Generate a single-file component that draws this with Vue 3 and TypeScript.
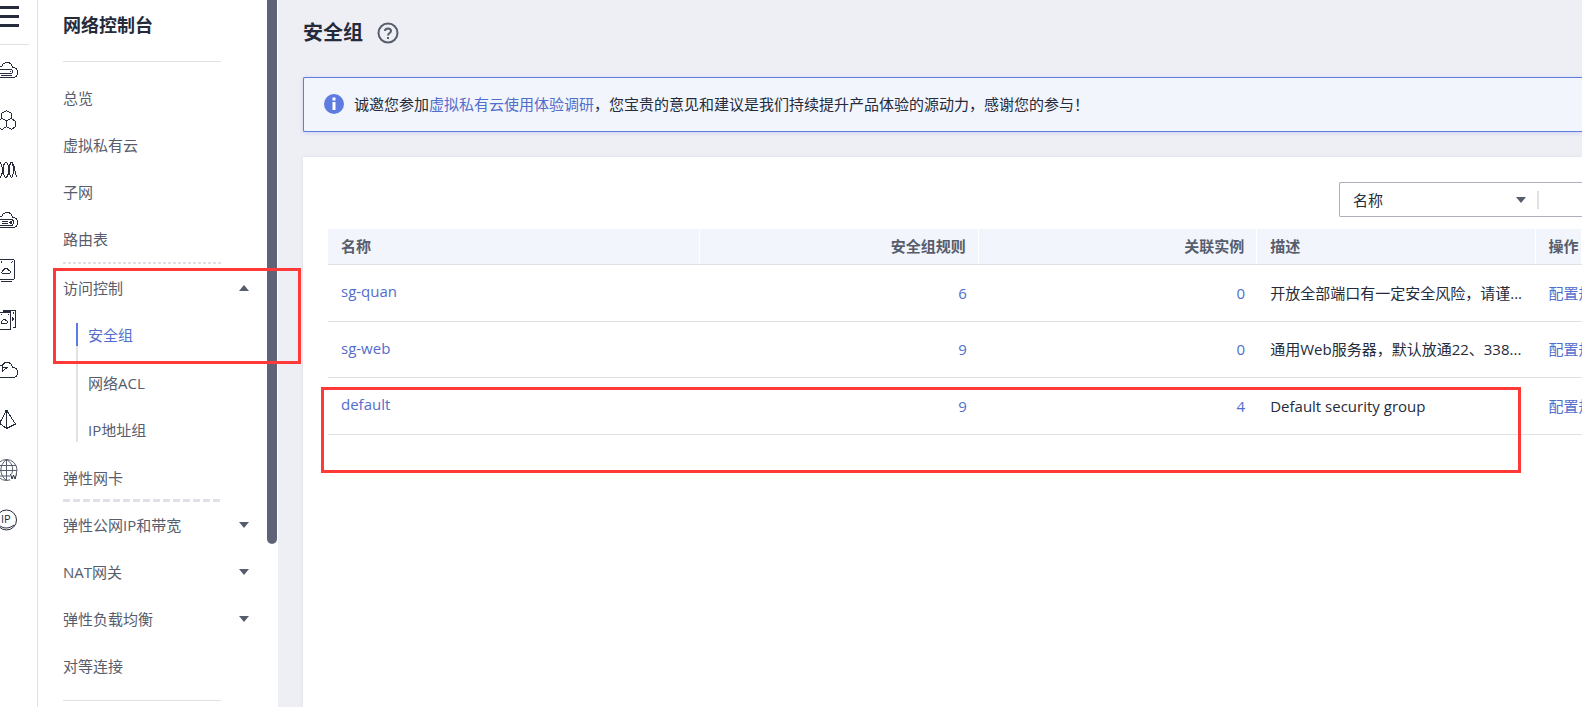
<script setup lang="ts">
import { ref } from 'vue'

interface NavItem {
  label: string
  expandable?: boolean
}
interface GroupRow {
  name: string
  rules: number
  instances: number
  description: string
}

const services: string[] = ['ecs', 'cce', 'as', 'bms', 'evs', 'backup', 'function', 'vpc', 'domain', 'eip']
const overview: NavItem[] = [{ label: '总览' }, { label: '虚拟私有云' }, { label: '子网' }, { label: '路由表' }]
const access: string[] = ['安全组', '网络ACL', 'IP地址组']
const network: NavItem[] = [
  { label: '弹性公网IP和带宽', expandable: true },
  { label: 'NAT网关', expandable: true },
  { label: '弹性负载均衡', expandable: true },
  { label: '对等连接' },
]
const rows: GroupRow[] = [
  { name: 'sg-quan', rules: 6, instances: 0, description: '开放全部端口有一定安全风险，请谨...' },
  { name: 'sg-web', rules: 9, instances: 0, description: '通用Web服务器，默认放通22、338...' },
  { name: 'default', rules: 9, instances: 4, description: 'Default security group' },
]
const current = ref('安全组')
const field = ref('名称')
const keyword = ref('')
</script>

<template>
  <div class="console">
    <aside class="rail">
      <button class="menu" type="button" aria-label="菜单"><i></i><i></i><i></i></button>
      <nav class="services">
        <a v-for="s in services" :key="s" href="#" :aria-label="s">
          <svg width="19" height="24" viewBox="0 0 19 24">
            <g v-if="s === 'ecs'" class="crisp">
              <path d="M0 9C1 9 1.500 8.500 2 8C3 5.500 4.500 4.500 7 4.500C10 4.500 12 6.500 12.500 9C15.500 9.500 17.500 11.500 17.500 14.500C17.500 17.500 15.500 19.500 12.500 19.500H0" />
              <path d="M0 11.500H11.500L12.500 12.500V14.500L11.500 15.500H0M1 17.500H12M10 13.500h1" />
            </g>
            <g v-else-if="s === 'cce'" class="crisp">
              <path d="M6.500 2.500L11.500 5.500V10.500L6.500 12.500L1.500 10.500V5.500ZM11.500 10.500L15.500 13.500V18.500L11.500 21.500L6.500 18.500V12.500M6.500 18.500L2 21.500L-3 18.500V13.500L1.500 10.500" />
            </g>
            <g v-else-if="s === 'as'" class="crisp">
              <path d="M0 4.500C3 7 3 17 0 19.500" />
              <ellipse cx="6" cy="12" rx="2.500" ry="7.500" />
              <path d="M0 19.500C4 17 2 5 5.500 4.500M6 19.500C10.500 17 8 5 11.500 4.500M6.500 4.500C10 6 8.500 18 11.500 19.500M11.500 4.500C7.500 8 9 17 11.500 19.500C14 17 14 7 11.500 4.500C16 5 14 18 17.500 19.500" />
            </g>
            <g v-else-if="s === 'bms'" class="crisp">
              <path d="M0 9C1 9 1.500 8.500 2 8C3 5.500 4.500 4.500 7 4.500C10 4.500 12 6.500 12.500 9C15.500 9.500 17.500 11.500 17.500 14.500C17.500 17.500 15.500 19.500 12.500 19.500H0" />
              <path d="M0 11.500H12L13.500 13V15.500L12 17.500H0M2 13.500H8M2 15.500H8" />
              <circle cx="11" cy="14.500" r="1" />
            </g>
            <g v-else-if="s === 'evs'" class="crisp">
              <path d="M0 1.500H13.500L14.500 2.500V20.500L13.500 21.500H0M1 23.500H12M1.500 3v2M12.500 3v1M11.500 4v1" />
              <path d="M3 15.500C1.500 15.500 1.500 12.500 3.500 12.500C4 10 8 9.500 8.500 12.500C11 12.500 11 15.500 9 15.500Z" />
            </g>
            <g v-else-if="s === 'backup'" class="crisp">
              <path d="M0 4.500H10.500V21.500H0M3 2.500H15.500V19.500H12.500M3 3.500H11M13.500 4v2M12 9.500L13.500 11L12 12.500M1.500 6v1M8.500 6v1" />
              <path d="M2 15.500C1 15 1 13.500 2.500 12.500C3 11 6 11 6 12.500C8 13.500 7.500 15 6 15.500Z" />
            </g>
            <g v-else-if="s === 'function'" class="crisp">
              <path d="M0 7.500H2C3 5.500 4.500 4.500 7 4.500C10 4.500 12 6.500 12.500 9C15.500 9.500 17.500 11.500 17.500 14.500C17.500 17.500 15.500 19.500 12.500 19.500H0M2.500 6.500L2.500 13.500L7 9.500H2" />
            </g>
            <g v-else-if="s === 'vpc'" class="crisp">
              <path d="M6.500 3V21M6 3L0 14.500M7 3L15.500 16L6.500 20.500L0 15.500" />
              <path d="M5.500 2.500h2v2h-2z" class="solid" />
            </g>
            <g v-else-if="s === 'domain'" class="soft">
              <circle cx="6.500" cy="12" r="10.500" />
              <path d="M6.500 1.500V22.500M0 7.500H16M0 12.500H17M0 18H10M6.500 1.500C14 6 14 13 10 19M6.500 1.500C-1 7 -1 17 6.500 22.500" />
              <path d="M10 16h7v6h-7z" class="patch" />
              <path d="M10.500 16L12 21L13.500 17L15 21L16.500 16" class="strong" />
            </g>
            <g v-else>
              <circle cx="6.500" cy="12" r="10" />
              <path d="M-1 17C3 21 9 21 14 17" />
              <text x="1" y="15">IP</text>
            </g>
          </svg>
        </a>
      </nav>
    </aside>

    <aside class="sidebar">
      <h2>网络控制台</h2>
      <hr class="rule" />
      <nav class="nav">
        <a v-for="n in overview" :key="n.label" class="item" href="#">{{ n.label }}</a>
        <div class="dots"></div>
        <div class="group">
          <button class="item" type="button">
            访问控制
            <svg class="caret" width="10" height="6" viewBox="0 0 10 6"><path d="M0 6L5 0L10 6Z" /></svg>
          </button>
          <div class="sub">
            <a v-for="a in access" :key="a" href="#" :class="{ active: a === current }" @click.prevent="current = a"><span>{{ a }}</span></a>
          </div>
          <div class="mark mark-nav"></div>
        </div>
        <a class="item" href="#">弹性网卡</a>
        <div class="dashes"></div>
        <template v-for="n in network" :key="n.label">
          <button v-if="n.expandable" class="item" type="button">
            {{ n.label }}
            <svg class="caret" width="10" height="6" viewBox="0 0 10 6"><path d="M0 0L5 6L10 0Z" /></svg>
          </button>
          <a v-else class="item" href="#">{{ n.label }}</a>
        </template>
        <hr class="rule last" />
      </nav>
      <div class="thumb"></div>
    </aside>

    <main class="content">
      <header class="head">
        <h1>安全组</h1>
        <button type="button" class="help" aria-label="帮助">
          <svg width="22" height="22" viewBox="0 0 22 22">
            <circle cx="11" cy="11" r="9.500" />
            <path d="M8 9C8 5.500 14 5.500 14 9C14 11 11 11 11 13.500M11 15V17" />
          </svg>
        </button>
      </header>

      <section class="notice">
        <svg width="20" height="20" viewBox="0 0 20 20">
          <circle cx="10" cy="10" r="10" />
          <path d="M8.500 3.500h3v3h-3zM8.500 8h3v8h-3z" />
        </svg>
        <p>诚邀您参加<a href="#">虚拟私有云使用体验调研</a>，您宝贵的意见和建议是我们持续提升产品体验的源动力，感谢您的参与！</p>
      </section>

      <section class="panel">
        <div class="search">
          <div class="field">
            <select v-model="field" aria-label="搜索字段"><option>名称</option></select>
            <svg class="caret" width="10" height="6" viewBox="0 0 10 6"><path d="M0 0L5 6L10 0Z" /></svg>
          </div>
          <input v-model="keyword" type="text" aria-label="关键字" />
        </div>
        <div class="list">
          <table>
            <colgroup><col class="c-name" /><col class="c-mid" /><col class="c-mid" /><col class="c-mid" /><col /></colgroup>
            <thead>
              <tr><th>名称</th><th class="num">安全组规则</th><th class="num">关联实例</th><th>描述</th><th>操作</th></tr>
            </thead>
            <tbody>
              <tr v-for="r in rows" :key="r.name">
                <td class="name"><a href="#">{{ r.name }}</a></td>
                <td class="num"><a href="#">{{ r.rules }}</a></td>
                <td class="num"><a href="#">{{ r.instances }}</a></td>
                <td>{{ r.description }}</td>
                <td><a href="#">配置规则</a></td>
              </tr>
            </tbody>
          </table>
          <div class="mark mark-row"></div>
        </div>
      </section>
    </main>
  </div>
</template>

<style>
body {
  margin: 0;
}
</style>

<style scoped>
.console {
  display: flex;
  height: 100vh;
  overflow: hidden;
  background: #eeeff5;
  color: #252b3a;
  font: 15px/24px "Open Sans", "Noto Sans CJK SC", sans-serif;
}
.console * {
  box-sizing: border-box;
}
a {
  color: #526ecc;
  text-decoration: none;
}
button,
select,
input {
  border: 0;
  padding: 0;
  background: none;
  font: inherit;
  color: inherit;
  outline: none;
}
svg {
  display: block;
}

.rail {
  flex: none;
  width: 38px;
  background: #fff;
  border-right: 1px solid #dfe1e6;
}
.menu {
  display: flex;
  flex-direction: column;
  gap: 6px;
  width: 29px;
  height: 45px;
  padding-top: 6px;
  border-bottom: 1px solid #dfe1e6;
}
.menu i {
  width: 19px;
  height: 3px;
  background: #252b3a;
}
.services {
  display: flex;
  flex-direction: column;
  gap: 26px;
  padding-top: 13px;
}
.services svg {
  fill: none;
  stroke: #252b3a;
  stroke-width: 1;
}
.services .crisp {
  shape-rendering: crispEdges;
}
.services .solid {
  fill: #252b3a;
}
.services .soft {
  stroke: #575d6c;
}
.services .patch {
  fill: #fff;
  stroke: none;
}
.services .strong {
  stroke: #252b3a;
}
.services text {
  fill: #252b3a;
  stroke: none;
  font-size: 11px;
}

.sidebar {
  position: relative;
  flex: none;
  width: 240px;
  background: #fff;
}
h2 {
  margin: 0;
  padding: 13px 0 0 25px;
  font-size: 18px;
  line-height: 24px;
}
.rule {
  width: 158px;
  height: 1px;
  margin: 24px 0 0 25px;
  border: 0;
  background: #dfe1e6;
}
.rule.last {
  margin: 11px 0 0;
}
.nav {
  padding: 12px 28px 0 25px;
}
.item {
  display: flex;
  align-items: center;
  justify-content: space-between;
  width: 100%;
  height: 47px;
  color: #575d6c;
}
.caret {
  fill: #575d6c;
}
.nav .caret {
  margin-right: 1px;
}
.dots {
  width: 158px;
  height: 2px;
  background: repeating-linear-gradient(90deg, #dfe1e6 0 3px, transparent 3px 5px);
}
.dashes {
  width: 158px;
  height: 3px;
  margin: -2px 0 -1px;
  background: repeating-linear-gradient(90deg, #dfe1e6 0 7px, transparent 7px 10px);
}
.group {
  position: relative;
  padding-bottom: 1px;
}
.sub {
  margin-left: 13px;
}
.sub a {
  display: flex;
  height: 47px;
  color: #575d6c;
}
.sub a span {
  display: flex;
  align-items: center;
  height: 47px;
  padding-left: 10px;
  border-left: 2px solid #dfe1e6;
}
.sub a:first-child {
  height: 48px;
  padding-top: 12px;
  background: linear-gradient(#dfe1e6, #dfe1e6) 0 100% / 2px 13px no-repeat;
}
.sub a:first-child span {
  height: 23px;
}
.sub a:last-child span {
  height: 36px;
  padding-top: 11px;
}
.sub a.active {
  color: #526ecc;
}
.sub a.active span {
  border-color: #5e7ce0;
}
.mark {
  position: absolute;
  border: 3px solid #ff3838;
  pointer-events: none;
  z-index: 2;
}
.mark-nav {
  top: 4px;
  left: -10px;
  width: 248px;
  height: 96px;
}
.thumb {
  position: absolute;
  top: 0;
  right: 1px;
  width: 10px;
  height: 544px;
  border-radius: 0 0 5px 5px;
  background: #5e6378;
}

.content {
  flex: 1;
  min-width: 0;
  display: flex;
  flex-direction: column;
  padding-left: 25px;
}
.head {
  display: flex;
  align-items: center;
  gap: 14px;
  height: 77px;
  padding-bottom: 12px;
}
h1 {
  margin: 0;
  font-size: 20px;
  line-height: 28px;
}
.help svg {
  fill: none;
  stroke: #575d6c;
  stroke-width: 2;
}
.notice {
  display: flex;
  align-items: center;
  gap: 10px;
  height: 55px;
  padding: 0 0 2px 20px;
  border: 1px solid #5e7ce0;
  border-right: 0;
  border-radius: 2px 0 0 2px;
  background: #f2f5fc;
  box-shadow: 0 1px 4px rgba(94, 124, 224, 0.25);
}
.notice svg {
  flex: none;
  fill: #5e7ce0;
}
.notice path {
  fill: #fff;
}
.notice p {
  margin: 0;
  white-space: nowrap;
}
.panel {
  flex: 1;
  margin-top: 25px;
  padding: 25px 0 0 25px;
  background: #fff;
  box-shadow: 0 0 4px rgba(37, 43, 58, 0.08);
}
.search {
  display: flex;
  align-items: center;
  width: 243px;
  height: 35px;
  margin-left: auto;
  border: 1px solid #adb0b8;
  border-right: 0;
  border-radius: 2px 0 0 2px;
}
.field {
  position: relative;
  flex: none;
  width: 199px;
  border-right: 2px solid #dfe1e6;
  height: 18px;
  display: flex;
  align-items: center;
}
.field select {
  width: 100%;
  height: 24px;
  padding: 0 0 2px 13px;
  appearance: none;
}
.field .caret {
  position: absolute;
  right: 11px;
}
.search input {
  flex: 1;
  min-width: 0;
  height: 32px;
}
.list {
  position: relative;
  margin-top: 12px;
}
table {
  width: 100%;
  table-layout: fixed;
  border-collapse: separate;
  border-spacing: 0;
}
.c-name {
  width: 29.7%;
}
.c-mid {
  width: 22.2%;
}
th,
td {
  padding: 0 13px;
  border-bottom: 1px solid #dfe1e6;
  text-align: left;
  white-space: nowrap;
}
th:last-child,
td:last-child {
  padding-right: 0;
  overflow: hidden;
}
td:nth-child(4) {
  padding-right: 0;
}
th {
  height: 36px;
  padding-bottom: 2px;
  background: #f2f5fc;
  color: #575d6c;
  box-shadow: inset -1px 0 #fff;
}
td {
  height: 57px;
}
tr:nth-child(2) td {
  height: 56px;
}
tbody td {
  padding-bottom: 1px;
}
tbody td.name {
  padding-bottom: 4px;
}
.num {
  text-align: right;
}
td.num {
  padding-right: 12px;
}
.mark-row {
  left: -7px;
  right: 61px;
  top: 158px;
  height: 86px;
}
</style>
